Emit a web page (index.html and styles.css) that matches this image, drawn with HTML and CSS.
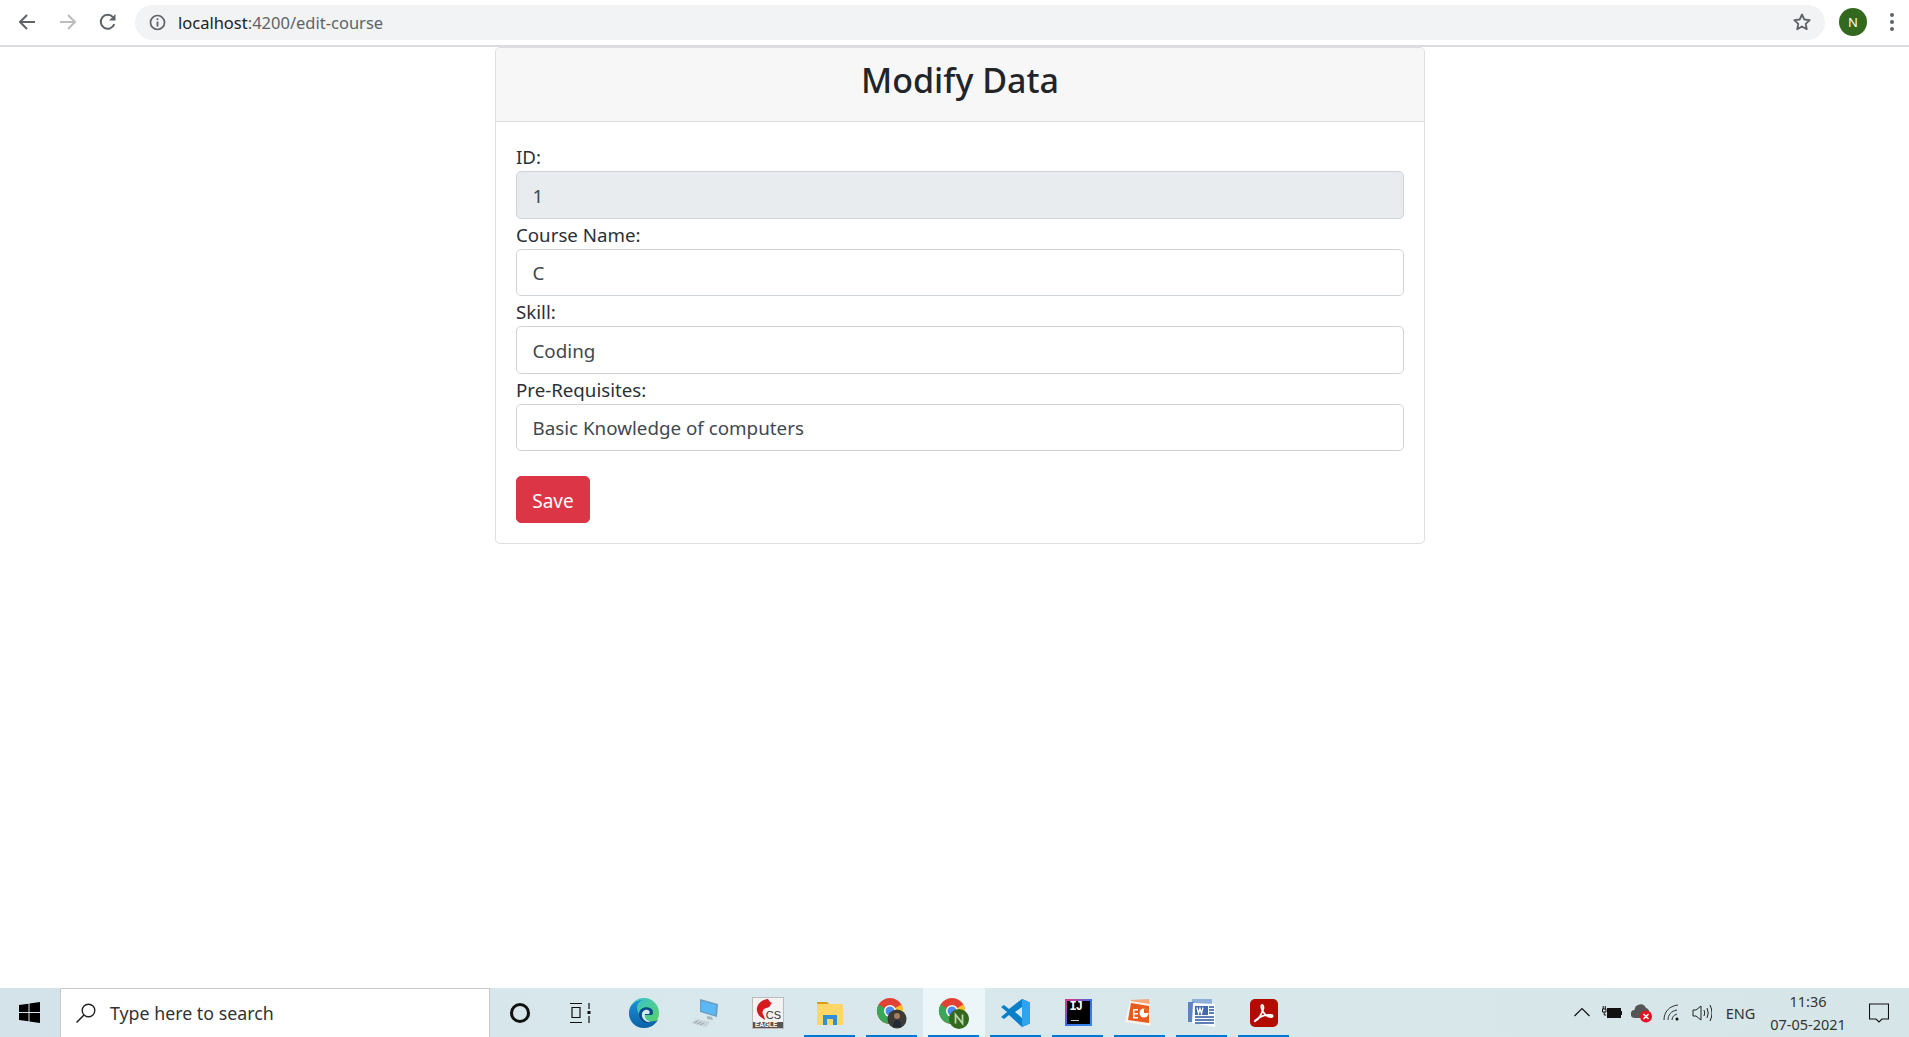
FILE: index.html
```html
<!DOCTYPE html>
<html lang="en">
<head>
<meta charset="utf-8">
<title>Edit course</title>
<link rel="stylesheet" href="styles.css">
</head>
<body>
<div class="screen">
  <header class="toolbar">
    <button class="nav back" aria-label="Back"><svg width="20" height="20" viewBox="0 0 20 20"><path d="M18 10H3.500M10 3l-7 7 7 7" fill="none" stroke="#5f6368" stroke-width="2"/></svg></button>
    <button class="nav forward" aria-label="Forward"><svg width="20" height="20" viewBox="0 0 20 20"><path d="M2 10h14.500M10 3l7 7-7 7" fill="none" stroke="#babcbe" stroke-width="2"/></svg></button>
    <button class="nav reload" aria-label="Reload"><svg width="20" height="20" viewBox="0 0 20 20"><path d="M16.300 12.200A7 7 0 1 1 15 5.100" fill="none" stroke="#5f6368" stroke-width="2"/><path d="M17.500 2v6.500H11z" fill="#5f6368"/></svg></button>
    <div class="omnibox">
      <svg class="info" width="17" height="17" viewBox="0 0 17 17"><circle cx="8.500" cy="8.500" r="7" fill="none" stroke="#5f6368" stroke-width="1.700"/><path d="M7.600 7.500h1.800v5H7.600zM7.600 4.300h1.800v1.800H7.600z" fill="#5f6368"/></svg>
      <span class="url"><span class="host">localhost</span>:4200/edit-course</span>
      <svg class="star" width="20" height="20" viewBox="0 0 20 20"><path d="M10 2.500l2.300 5 5.400.6-4 3.700 1.100 5.400L10 14.500l-4.800 2.700 1.100-5.400-4-3.700 5.400-.6z" fill="none" stroke="#5f6368" stroke-width="1.800" stroke-linejoin="round"/></svg>
    </div>
    <div class="avatar">N</div>
    <div class="menu"><i></i><i></i><i></i></div>
  </header>

  <main class="page">
    <section class="card">
      <div class="card-header"><h3>Modify Data</h3></div>
      <form class="card-body">
        <div class="field"><label>ID:</label><input class="control" value="1" disabled></div>
        <div class="field"><label>Course Name:</label><input class="control" value="C"></div>
        <div class="field"><label>Skill:</label><input class="control" value="Coding"></div>
        <div class="field"><label>Pre-Requisites:</label><input class="control" value="Basic Knowledge of computers"></div>
        <button class="save" type="button">Save</button>
      </form>
    </section>
  </main>

  <footer class="taskbar">
    <div class="start"><svg width="21" height="21" viewBox="0 0 21 21"><path d="M0 3l9.500-1.300v8.300H0zM10.500 1.500L21 0v10H10.500zM0 11h9.500v8.300L0 18zM10.500 11H21v10l-10.500-1.500z" fill="#000"/></svg></div>
    <div class="search">
      <svg width="22" height="22" viewBox="0 0 22 22"><circle cx="13.500" cy="8.500" r="6.300" fill="none" stroke="#222" stroke-width="1.400"/><path d="M9 13L1.500 20.500" stroke="#222" stroke-width="1.500"/></svg>
      <span>Type here to search</span>
    </div>
    <div class="apps">
      <div class="app"><svg width="22" height="22" viewBox="0 0 22 22"><circle cx="11" cy="11" r="8.500" fill="none" stroke="#111" stroke-width="3"/></svg></div>
      <div class="app taskview"><svg width="22" height="22" viewBox="0 0 22 22"><path d="M1 1.500h12M1 20.500h12M3 5.500h8v10H3zM20 1v6M20 14v7" fill="none" stroke="#111" stroke-width="1.200"/><rect x="18.500" y="9" width="3" height="3" fill="#111"/></svg></div>
      <div class="app"><svg width="32" height="32" viewBox="0 0 32 32"><defs><linearGradient id="edgeA" x1="0" y1="0" x2="1" y2="1"><stop offset="0" stop-color="#35c1d8"/><stop offset="1" stop-color="#5ed35c"/></linearGradient><linearGradient id="edgeB" x1="0" y1="0" x2="0" y2="1"><stop offset="0" stop-color="#1a8fd8"/><stop offset="1" stop-color="#0d62a8"/></linearGradient></defs><circle cx="16" cy="16" r="15" fill="url(#edgeA)"/><path d="M1 16C1 8 8 3 15 3c-6 2-7 7-5 12 2 7 10 12 20 8-3 5-8 8-14 8C8 31 1 25 1 16z" fill="url(#edgeB)"/><path d="M11 17c0-5 6-8 11-6 3 1 4 5 2 7h-8c0-2 2-3 3-4-4-1-6 2-5 5 1 4 6 6 10 6-6 3-13-1-13-8z" fill="#0a4c8a"/><path d="M14 18c0-4 3-6 6-5 2 1 2 3 1 4h-4c-1 3 1 7 6 8-5 1-9-3-9-7z" fill="#d8e8ec"/></svg></div>
      <div class="app"><svg width="30" height="30" viewBox="0 0 30 30"><path d="M9 1l18 5-1 13-17-5z" fill="#6b9dc2"/><path d="M10 3l15 4-.8 10L10 13z" fill="#5ab8f5"/><path d="M16 18l5 1 1 3-6-1z" fill="#a9b6bf"/><path d="M0 25l6-4 13 3-4 5z" fill="#c9d2d8"/><path d="M3 25l4-2M6 26l4-2M9 27l4-2" stroke="#9aa6ae"/></svg></div>
      <div class="app"><div class="eagle"><svg width="30" height="30" viewBox="0 0 30 30"><rect width="30" height="30" fill="#f3f3f3"/><path d="M15 1C7 2 3 8 4 13c1 5 5 7 8 9l-1-4c-2-2-2-5 0-7 1-1 4-1 5-2 2-1 1-3 3-4l-2-1z" fill="#d8181f"/><rect y="24" width="30" height="6" fill="#555"/></svg><span class="cs">CS</span><span class="eg">EAGLE</span></div></div>
      <div class="app running"><svg width="28" height="24" viewBox="0 0 28 24"><path d="M1 1h10l2 2H1z" fill="#d99a1e"/><path d="M1 3h26v21H1z" fill="#ffd768"/><path d="M7 14h14v10h-4v-6h-6v6H7z" fill="#2f8fd8"/></svg></div>
      <div class="app running"><svg width="32" height="32" viewBox="0 0 32 32"><circle cx="14" cy="14" r="13" fill="#e34133"/><path d="M14 14L25.300 7.500A13 13 0 0 1 14 27z" fill="#fbc02d"/><path d="M14 14L14 27A13 13 0 0 1 2.700 7.500z" fill="#3aa757"/><circle cx="14" cy="14" r="6" fill="#fff"/><circle cx="14" cy="14" r="4.500" fill="#4a8af4"/><circle cx="21" cy="22" r="9.500" fill="#3c3a35"/><circle cx="21" cy="19" r="3" fill="#a87c60"/><path d="M17 30c0-5 2-7 4-7s4 2 4 7z" fill="#1e2a35"/></svg></div>
      <div class="app running active"><svg width="32" height="32" viewBox="0 0 32 32"><circle cx="14" cy="14" r="13" fill="#e34133"/><path d="M14 14L25.300 7.500A13 13 0 0 1 14 27z" fill="#fbc02d"/><path d="M14 14L14 27A13 13 0 0 1 2.700 7.500z" fill="#3aa757"/><circle cx="14" cy="14" r="6" fill="#fff"/><circle cx="14" cy="14" r="4.500" fill="#4a8af4"/><circle cx="21" cy="22" r="10" fill="#33691e"/><path d="M17.500 26.500v-9l7 9v-9" fill="none" stroke="#b9d4a8" stroke-width="1.800"/></svg></div>
      <div class="app running"><svg width="30" height="30" viewBox="0 0 30 30"><path d="M21 1l8 3.500v21L21 29 8 17l-5 4-3-2 6-5-6-5 3-2 5 4z" fill="#0a7fc9"/><path d="M21 1l8 3.500v21L21 29z" fill="#2aa5ee"/><path d="M21 9l-7 5 7 6z" fill="#d6e7ec"/></svg></div>
      <div class="app running"><div class="idea"><div class="idea-inner"><span>IJ</span><i></i></div></div></div>
      <div class="app running"><svg width="30" height="30" viewBox="0 0 30 30"><path d="M6 2l18-1 1 7-14 3-6 8z" fill="#f6a77a"/><path d="M5 3l20 3 .5 22L0 24z" fill="#f8f4f0"/><path d="M6 5l18 3v17L3 22z" fill="#ea5a1c"/><path d="M8 11h5v1.500H9.500V15H13v1.500H9.500V19H13v1.500H8z" fill="#fff"/><circle cx="19" cy="15" r="4.500" fill="#fff"/><path d="M19 15h4.500A4.500 4.500 0 0 0 19 10.500z" fill="#ea5a1c"/></svg></div>
      <div class="app running"><svg width="30" height="30" viewBox="0 0 30 30"><path d="M5 1h20v6L3 24z" fill="#8daed8"/><path d="M1 4h6v20H1z" fill="#5e84c0"/><path d="M6 5l22 1v23L5 25z" fill="#fafcff"/><path d="M8 8h13v9H8z" fill="#3f68ad"/><path d="M10 9.500l1.500 6 1.500-5 1.500 5 1.500-6" fill="none" stroke="#fff" stroke-width="1.300"/><path d="M22 9h5M22 12h5M22 15h5M8 19h19M8 22h19M8 25h19" stroke="#2d56a0" stroke-width="1.500"/></svg></div>
      <div class="app running"><div class="acrobat"><svg width="22" height="22" viewBox="0 0 22 22"><path d="M2 19c3-1 6-6 8-11 .8-2 .5-5-.8-5-1.500 0-1 4 1 7 2 3 5 5 8 5 2 0 2-2 0-2-4-.5-10 1-14 4-2 1-3 3-2 2z" fill="none" stroke="#fff" stroke-width="1.800"/></svg></div></div>
    </div>
    <div class="tray">
      <div class="tray-item chevron"><svg width="16" height="10" viewBox="0 0 16 10"><path d="M.5 9L8 1.500 15.500 9" fill="none" stroke="#111" stroke-width="1.200"/></svg></div>
      <div class="tray-item battery"><svg width="20" height="14" viewBox="0 0 20 14"><path d="M1.200 0v3M3.300 0v3M0.500 3h3.500v3h-3.500zM2.200 6v3h2" stroke="#111" fill="none"/><rect x="5" y="2" width="14" height="10" fill="#111"/><rect x="19" y="5" width="1" height="4" fill="#111"/></svg></div>
      <div class="tray-item cloud"><svg width="22" height="20" viewBox="0 0 22 20"><path d="M4 15a4 4 0 0 1-.5-8A6 6 0 0 1 15 5a4.500 4.500 0 0 1 3 6v4z" fill="#555"/><circle cx="15" cy="13.500" r="6" fill="#e81123"/><path d="M12.500 11l5 5M17.500 11l-5 5" stroke="#fff" stroke-width="1.500"/></svg></div>
      <div class="tray-item wifi"><svg width="18" height="18" viewBox="0 0 18 18"><path d="M1 16C1 8 6 2 15 1M5 16c0-5 3-9 9-10M9 16c0-3 2-5 5-6" fill="none" stroke="#333"/><circle cx="14" cy="15" r="1.500" fill="#111"/></svg></div>
      <div class="tray-item volume"><svg width="20" height="18" viewBox="0 0 20 18"><path d="M1 6h3l5-4v14l-5-4H1z" fill="none" stroke="#222"/><path d="M12 6q1.500 3 0 6M15 4q2.500 5 0 10M18 1q4 8 0 16" fill="none" stroke="#222"/></svg></div>
      <div class="tray-item lang">ENG</div>
      <div class="clock"><span>11:36</span><span>07-05-2021</span></div>
      <div class="tray-item notify"><svg width="20" height="20" viewBox="0 0 20 20"><path d="M.500 1h19v15H13l-3 3-3-3H.500z" fill="none" stroke="#111" stroke-width="1.100"/></svg></div>
    </div>
  </footer>
</div>
</body>
</html>
```

FILE: styles.css
```css
* { box-sizing: border-box; }
html, body { margin: 0; height: 100%; }
body { background: #fff; color: #212529; font-family: "Noto Sans", "Open Sans", sans-serif; overflow: hidden; }
.screen { display: flex; flex-direction: column; height: 1037px; }

/* browser toolbar */
.toolbar { display: flex; align-items: center; flex: none; height: 47px; padding: 0 0 1px 17px; background: #fff; border-bottom: 2px solid #dadce0; }
.nav { width: 20px; height: 20px; padding: 0; margin-right: 21px; border: 0; background: none; display: block; }
.nav svg { display: block; }
.reload { margin-left: -1px; margin-right: 17px; }
.omnibox { display: flex; align-items: center; width: 1690px; height: 35px; padding: 0 13px 0 14px; border-radius: 18px; background: #f1f3f4; }
.info { flex: none; }
.url { margin-left: 12px; font-size: 16.500px; color: #5f6368; }
.host { color: #202124; }
.star { flex: none; margin-left: auto; }
.avatar { flex: none; display: flex; align-items: center; justify-content: center; width: 28px; height: 28px; margin-left: 14px; border-radius: 50%; background: #33691e; color: #fff; font-size: 13px; }
.menu { display: flex; flex-direction: column; gap: 3px; margin-left: 23px; }
.menu i { display: block; width: 4px; height: 4px; border-radius: 50%; background: #5f6368; }

/* page */
.page { flex: 1; display: flex; justify-content: center; align-items: flex-start; min-height: 0; padding-left: 11px; }
.card { width: 930px; background: #fff; border: 1px solid #dfdfdf; border-radius: 5px; }
.card-header { height: 74px; display: flex; align-items: center; justify-content: center; padding-bottom: 10px; background: #f7f7f7; border-bottom: 1px solid #dfdfdf; border-radius: 4px 4px 0 0; }
h3 { margin: 0; font-size: 34px; font-weight: 500; line-height: 1; color: #212529; }
.card-body { display: flex; flex-direction: column; align-items: flex-start; padding: 19px 20px 20px; }
.field { width: 100%; }
label { display: block; height: 30px; font-size: 18.700px; line-height: 32px; color: #2b3036; }
.control { display: block; width: 100%; height: 47.500px; padding: 2px 15.500px 0; border: 1px solid #ced4da; border-radius: 5px; background: #fff; color: #41484f; font: 18.800px "Noto Sans", "Open Sans", sans-serif; outline: 0; }
.control:disabled { background: #e9ecef; opacity: 1; color: #41484f; }
.save { height: 47px; width: 74px; margin-top: 25px; padding: 2px 0 0; border: 1px solid #dc3545; border-radius: 5px; background: #dc3545; color: #fff; font: 19px "Noto Sans", "Open Sans", sans-serif; }

/* taskbar */
.taskbar { flex: none; display: flex; height: 49px; background: linear-gradient(90deg, #d4e3ea, #d8e8ec 40%, #d6e6e8); }
.start { flex: none; width: 60px; display: flex; align-items: center; justify-content: center; padding-right: 1px; }
.search { flex: none; display: flex; align-items: center; gap: 13px; width: 430px; padding: 0 0 1px 14px; background: #fff; border: 1px solid #c9c9c9; border-bottom: 0; font-size: 17.800px; color: #333; }
.apps { display: flex; margin-left: -1px; }
.app { position: relative; flex: none; width: 62px; height: 49px; display: flex; align-items: center; justify-content: center; }
.app.taskview { padding-right: 4px; }
.app.running::after { content: ""; position: absolute; left: 5px; right: 6px; bottom: 0; height: 2px; background: #0078d4; }
.app.running.active { background: #ecf5f7; }
.eagle { position: relative; width: 30px; height: 30px; outline: 1px solid #bbb; }
.eagle svg { display: block; }
.cs { position: absolute; right: 2px; top: 11px; font: 11px "Liberation Sans", sans-serif; color: #333; }
.eg { position: absolute; left: 2px; bottom: 0; font: bold 6.500px "Liberation Sans", sans-serif; color: #fff; }
.idea { width: 27px; height: 27px; background: linear-gradient(135deg, #d13a8c 10%, #3f6fe0 50%, #2e8bf0); padding: 2px; }
.idea-inner { position: relative; width: 100%; height: 100%; background: #000; color: #fff; font: bold 12px "Liberation Mono", monospace; padding: 1px 0 0 3px; }
.idea-inner span { display: block; line-height: 11px; letter-spacing: -1px; }
.idea-inner i { position: absolute; left: 4px; bottom: 3px; width: 8px; height: 1px; background: #ccc; }
.acrobat { width: 28px; height: 28px; display: flex; align-items: center; justify-content: center; border-radius: 5px; background: #b30b00; }
.tray { flex: 1; display: flex; align-items: center; justify-content: flex-end; color: #333; }
.tray-item { flex: none; display: flex; align-items: center; justify-content: center; }
.chevron { width: 30px; margin-bottom: 1px; }
.battery, .cloud, .wifi, .volume { width: 30px; }
.lang { width: 47px; font-size: 14.500px; }
.clock { flex: none; width: 88px; margin-right: 3px; display: flex; flex-direction: column; align-items: center; font-size: 14.500px; line-height: 23px; }
.notify { width: 54px; padding-right: 7px; }
```
